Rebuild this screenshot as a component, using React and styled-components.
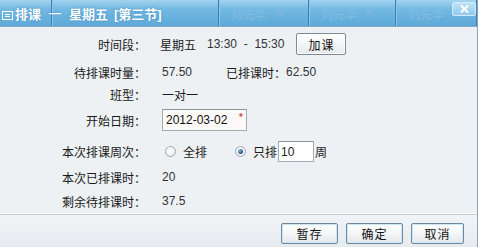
import React from 'react';
import styled, { createGlobalStyle } from 'styled-components';

const GlobalStyle = createGlobalStyle`
  html, body {
    margin: 0;
    padding: 0;
    background: #ffffff;
  }
  body {
    font-family: "Liberation Sans", "Noto Sans CJK SC", sans-serif;
    font-size: 12px;
    color: #222;
  }
`;

const Dialog = styled.div`
  width: 477px;
  height: 247px;
  display: flex;
  flex-direction: column;
  border-right: 1px solid #8aa6bc;
  background: #edf1f4;
  overflow: hidden;
`;

const TitleBar = styled.div`
  position: relative;
  height: 27px;
  flex: none;
  background: linear-gradient(to bottom, #a3d4f0 0%, #72b9e2 35%, #5ea9d8 100%);
  border-bottom: 1px solid #7fa9c6;
  box-sizing: border-box;
`;

const Backdrop = styled.div`
  position: absolute;
  inset: 0;
  display: flex;
`;

const BackCell = styled.div`
  width: ${p => p.$w}px;
  flex: none;
  border-right: 1px solid #3f7fb0;
  box-shadow: 1px 0 0 #8cc6e8;
  display: flex;
  align-items: center;
  padding-left: 12px;
  box-sizing: border-box;
  color: #80bde2;
  font-size: 12px;
  gap: 6px;
`;

const FaintX = styled.span`
  font-size: 15px;
  color: #7cb8de;
`;

const TitleContent = styled.div`
  position: relative;
  height: 26px;
  display: flex;
  align-items: center;
  padding-left: 2px;
  color: #ffffff;
  font-weight: bold;
  font-size: 12px;
  text-shadow: 0 0 2px #3d86bb;
`;

const TitleIcon = styled.svg`
  width: 11px;
  height: 9px;
  margin-top: 4px;
  margin-right: 2px;
  flex: none;
`;

const TitlePart = styled.span`
  margin-left: ${p => p.$ml || 0}px;
  font-size: ${p => p.$fs || 12}px;
`;

const CloseBtn = styled.div`
  position: absolute;
  top: 2px;
  right: 1px;
  width: 22px;
  height: 12px;
  border: 1px solid #d6ecf9;
  border-radius: 2px;
  background: linear-gradient(#c0e2f6, #8fcbee);
  display: flex;
  align-items: center;
  justify-content: center;
`;

const Body = styled.div`
  flex: 1;
  display: flex;
  flex-direction: column;
  border-bottom: 1px solid #ffffff;
`;

const Row = styled.div`
  display: grid;
  grid-template-columns: 146px auto;
  column-gap: ${p => p.$gap ?? 16}px;
  align-items: center;
  height: ${p => p.$h || 20}px;
  margin-top: ${p => p.$mt || 0}px;
`;

const Label = styled.div`
  text-align: right;
  white-space: nowrap;
  color: #1a1a1a;
`;

const Values = styled.div`
  display: flex;
  align-items: center;
  white-space: nowrap;
`;

const Val = styled.span`
  margin-left: ${p => p.$ml || 0}px;
  color: ${p => p.$muted ? '#333' : '#1a1a1a'};
`;

const Button = styled.button`
  width: ${p => p.$w || 50}px;
  height: ${p => p.$h || 22}px;
  margin-left: ${p => p.$ml || 0}px;
  padding: 0;
  font-family: "Noto Sans CJK SC", sans-serif;
  font-size: 12px;
  letter-spacing: 1px;
  color: #111;
  border: 1px solid ${p => p.$glow ? '#6e8aa0' : '#7d8b97'};
  border-radius: 2px;
  background: linear-gradient(to bottom, #ffffff 0%, #f3f5f7 50%, #e4e9ed 100%);
  box-shadow: inset 0 0 0 1px ${p => p.$glow ? '#cde6f5' : '#ffffff'};
  cursor: pointer;
`;

const DateBox = styled.div`
  position: relative;
  width: 85px;
  height: 22px;
  box-sizing: border-box;
  border: 1px solid #a3abb4;
  border-top-color: #8c949d;
  background: #fcf9f8;
  display: flex;
  align-items: center;
  padding-left: 3px;
  font-size: 12px;
  color: #111;
`;

const Star = styled.span`
  position: absolute;
  right: 3px;
  top: 1px;
  color: #c0262a;
  font-size: 11px;
`;

const Radio = styled.span`
  width: 11px;
  height: 11px;
  box-sizing: border-box;
  border-radius: 50%;
  border: 1px solid #a0a7ae;
  background: radial-gradient(circle at 40% 40%, #ffffff 0%, #e3e6e9 100%);
  margin-left: ${p => p.$ml || 0}px;
  margin-right: 7px;
  display: flex;
  align-items: center;
  justify-content: center;
  flex: none;
  &::after {
    content: '';
    display: ${p => p.$checked ? 'block' : 'none'};
    width: 5px;
    height: 5px;
    border-radius: 50%;
    background: radial-gradient(circle at 35% 35%, #8fc0e4 0%, #2a5f8e 60%, #1c4670 100%);
  }
`;

const WeekInput = styled.div`
  width: 36px;
  height: 21px;
  box-sizing: border-box;
  border: 1px solid #a3abb4;
  border-top-color: #8c949d;
  background: #ffffff;
  display: flex;
  align-items: center;
  padding-left: 2px;
  margin-left: 1px;
  margin-right: 1px;
`;

const Footer = styled.div`
  height: 33px;
  flex: none;
  border-top: 1px solid #c3c9ce;
  background: linear-gradient(to bottom, #f1f4f6, #e6ebef);
  display: flex;
  justify-content: flex-end;
  align-items: flex-start;
  padding-top: 8px;
  padding-right: 13px;
  box-sizing: border-box;
  gap: 8px;
`;

export default function App() {
  return (
    <>
      <GlobalStyle />
      <Dialog>
        <TitleBar>
          <Backdrop>
            <BackCell $w={52} />
            <BackCell $w={167} />
            <BackCell $w={90}>刘先华<FaintX>✕</FaintX></BackCell>
            <BackCell $w={87}>刘先华<FaintX>✕</FaintX></BackCell>
            <BackCell $w={81}>刘先华<FaintX>✕</FaintX></BackCell>
          </Backdrop>
          <TitleContent>
            <TitleIcon viewBox="0 0 11 9">
              <rect x="0.5" y="0.5" width="10" height="8" fill="none" stroke="#ffffff" />
              <line x1="3" y1="3.5" x2="8" y2="3.5" stroke="#ffffff" />
              <line x1="3" y1="5.5" x2="8" y2="5.5" stroke="#ffffff" />
            </TitleIcon>
            <TitlePart $fs={13}>排课</TitlePart>
            <TitlePart $ml={8}>—</TitlePart>
            <TitlePart $ml={8} $fs={13}>星期五</TitlePart>
            <TitlePart $ml={6} $fs={13}>[第三节]</TitlePart>
          </TitleContent>
          <CloseBtn>
            <svg width="9" height="8" viewBox="0 0 9 8">
              <path d="M1 0.5 L8 7.5 M8 0.5 L1 7.5" stroke="#ffffff" strokeWidth="2" />
            </svg>
          </CloseBtn>
        </TitleBar>

        <Body>
          <Row $h={22} $mt={6} $gap={14}>
            <Label>时间段：</Label>
            <Values>
              <Val>星期五</Val>
              <Val $ml={11} $muted>13:30&nbsp;&nbsp;-&nbsp;&nbsp;15:30</Val>
              <Button $ml={12} $w={50} $h={22}>加课</Button>
            </Values>
          </Row>
          <Row $mt={7}>
            <Label>待排课时量：</Label>
            <Values>
              <Val $muted>57.50</Val>
              <Val $ml={34}>已排课时：</Val>
              <Val $muted>62.50</Val>
            </Values>
          </Row>
          <Row $mt={2}>
            <Label>班型：</Label>
            <Values>
              <Val>一对一</Val>
            </Values>
          </Row>
          <Row $h={22} $mt={5}>
            <Label>开始日期：</Label>
            <Values>
              <DateBox>
                2012-03-02
                <Star>*</Star>
              </DateBox>
            </Values>
          </Row>
          <Row $h={21} $mt={10}>
            <Label>本次排课周次：</Label>
            <Values>
              <Radio $ml={3} />
              <Val>全排</Val>
              <Radio $ml={28} $checked />
              <Val>只排</Val>
              <WeekInput>10</WeekInput>
              <Val>周</Val>
            </Values>
          </Row>
          <Row $mt={5}>
            <Label>本次已排课时：</Label>
            <Values>
              <Val $muted>20</Val>
            </Values>
          </Row>
          <Row $mt={4}>
            <Label>剩余待排课时：</Label>
            <Values>
              <Val $muted>37.5</Val>
            </Values>
          </Row>
        </Body>

        <Footer>
          <Button $w={57} $h={21} $glow>暂存</Button>
          <Button $w={57} $h={21} $glow>确定</Button>
          <Button $w={53} $h={21} $glow>取消</Button>
        </Footer>
      </Dialog>
    </>
  );
}
